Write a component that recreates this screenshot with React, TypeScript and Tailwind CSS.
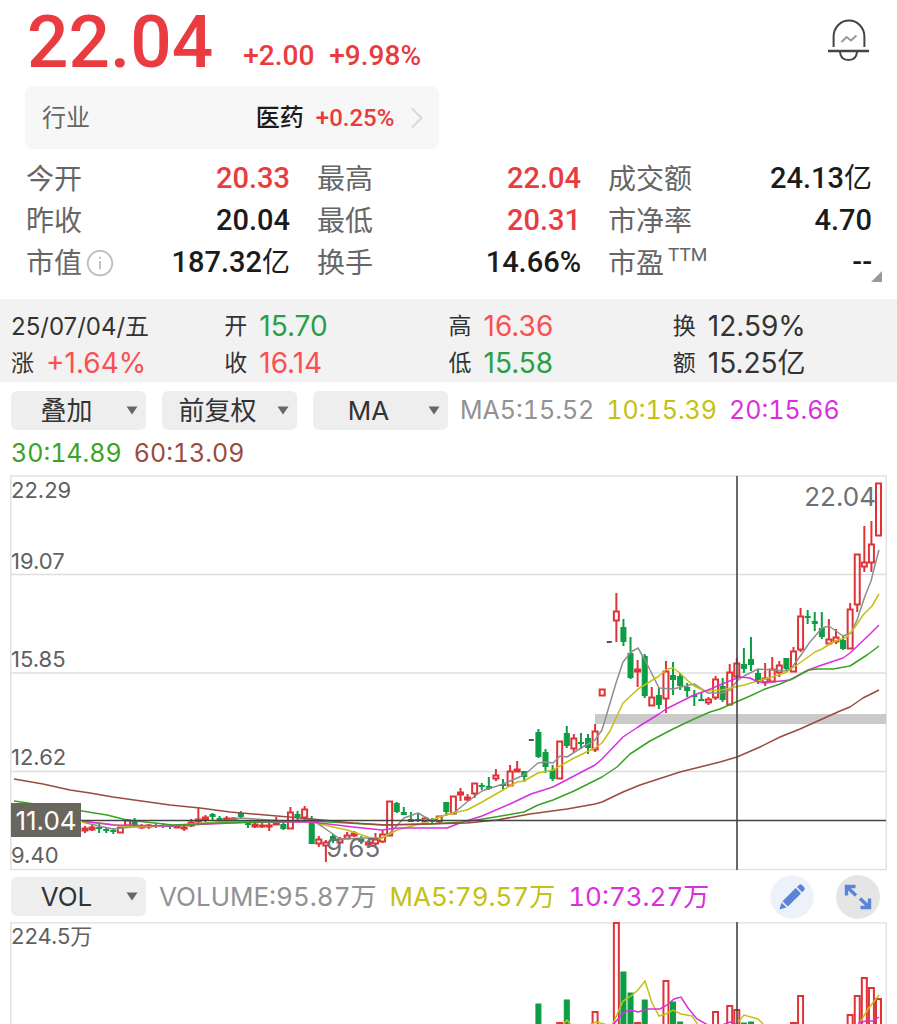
import type { ReactNode } from "react";

const RED = "#e13238";
const GREEN = "#0b9e45";
const LAST_X = 878.5;
const PITCH = 7.085;

// direction, high, body top, body bottom, low; newest candle first
type Candle = ["r" | "g" | "-", number, number, number, number];

const candles: Candle[] = [
  ["r", 483, 483, 536, 536], ["r", 521, 544, 563, 572], ["r", 526, 562, 567, 572], ["r", 554, 554, 605, 612],
  ["r", 603, 609, 649, 649], ["g", 635, 640, 649, 650], ["r", 629, 637, 642, 644], ["r", 619, 639, 644, 644],
  ["g", 612, 628, 637, 639], ["g", 612, 621, 624, 631], ["g", 610, 616, 618, 624], ["r", 608, 616, 650, 652],
  ["r", 647, 651, 672, 672], ["g", 658, 658, 669, 671], ["r", 661, 665, 673, 677], ["r", 657, 669, 682, 682],
  ["r", 663, 678, 683, 686], ["g", 670, 673, 681, 684], ["g", 637, 659, 665, 671], ["g", 648, 664, 669, 673],
  ["r", 658, 663, 677, 677], ["r", 664, 672, 705, 705], ["g", 678, 686, 700, 702], ["r", 676, 679, 698, 700],
  ["r", 697, 699, 703, 705], ["g", 692, 699, 701, 701], ["g", 690, 695, 697, 706], ["g", 683, 687, 691, 697],
  ["g", 673, 676, 686, 690], ["g", 662, 675, 680, 695], ["r", 661, 671, 699, 713], ["g", 688, 695, 705, 709],
  ["r", 687, 697, 706, 706], ["g", 654, 656, 696, 698], ["r", 660, 669, 672, 687], ["g", 637, 653, 678, 679],
  ["g", 619, 627, 642, 646], ["r", 593, 611, 621, 642], ["-", 642, 642, 642, 642], ["r", 689, 689, 696, 696],
  ["r", 724, 731, 750, 752], ["g", 734, 738, 748, 754], ["g", 733, 742, 744, 749], ["r", 734, 738, 749, 753],
  ["g", 726, 733, 746, 748], ["r", 741, 741, 779, 779], ["g", 765, 770, 779, 781], ["g", 749, 752, 767, 773],
  ["g", 729, 732, 757, 758], ["-", 740, 740, 740, 740], ["g", 771, 771, 777, 782], ["r", 761, 769, 772, 772],
  ["r", 765, 771, 786, 786], ["g", 779, 784, 786, 790], ["r", 769, 775, 779, 781], ["g", 777, 786, 789, 790],
  ["g", 783, 785, 787, 790], ["r", 783, 783, 794, 798], ["r", 794, 797, 800, 801], ["r", 788, 792, 795, 801],
  ["r", 796, 796, 814, 814], ["g", 802, 802, 812, 816], ["r", 816, 816, 822, 823], ["g", 818, 819, 822, 823],
  ["r", 817, 818, 822, 822], ["g", 814, 819, 821, 822], ["g", 812, 819, 822, 822], ["g", 807, 812, 815, 815],
  ["g", 802, 803, 812, 813], ["r", 801, 801, 836, 836], ["r", 830, 834, 842, 843], ["r", 833, 839, 844, 846],
  ["r", 840, 842, 845, 845], ["g", 836, 838, 842, 844], ["r", 831, 833, 836, 837], ["r", 832, 835, 839, 839],
  ["r", 837, 839, 843, 844], ["g", 834, 836, 841, 843], ["r", 840, 842, 846, 862], ["r", 836, 839, 844, 847],
  ["g", 816, 820, 844, 844], ["r", 806, 809, 818, 820], ["g", 811, 814, 817, 821], ["r", 807, 812, 829, 829],
  ["g", 822, 824, 829, 830], ["r", 817, 823, 824, 825], ["r", 823, 825, 827, 831], ["r", 823, 825, 826, 828],
  ["r", 823, 824, 827, 828], ["g", 820, 822, 825, 828], ["g", 811, 813, 817, 818], ["r", 817, 818, 821, 821],
  ["r", 816, 818, 820, 821], ["g", 816, 818, 821, 822], ["g", 813, 814, 817, 820], ["r", 815, 817, 820, 822],
  ["r", 808, 819, 822, 823], ["r", 819, 822, 826, 827], ["r", 825, 827, 829, 831], ["r", 824, 826, 827, 828],
  ["g", 824, 825, 827, 829], ["g", 823, 825, 826, 828], ["g", 823, 825, 827, 828], ["r", 824, 825, 827, 829],
  ["r", 824, 826, 828, 829], ["g", 818, 820, 826, 827], ["r", 819, 820, 826, 827], ["r", 827, 827, 833, 833],
  ["g", 828, 830, 832, 834], ["g", 827, 829, 831, 833], ["g", 824, 827, 829, 833], ["r", 825, 827, 830, 831],
  ["r", 826, 828, 831, 833],
];

const averages = [
  { color: "#8f8f8f", points: "82,822 99,826 113,829 133,827 170,826 220,822 240,818 283,821 312,820 323,827 340,839 367,838 382,838 390,833 404,818 418,813 432,821 439,817 455,812 467,802 482,791 503,784 524,775 538,763 546,762 553,763 560,756 567,757 581,748 595,740 602,730 616,683 623,662 631,652 638,648 645,660 659,688 673,689 694,684 708,693 722,693 730,690 737,681 744,676 750,673 758,669 773,670 787,671 793,666 801,655 810,642 822,628 829,626 836,631 843,636 851,633 857,620 865,596 871,581 875,565 879,550" },
  { color: "#c3c111", points: "82,822 100,823 133,827 180,825 220,822 253,821 312,822 333,827 347,830 368,837 380,839 397,830 412,826 425,823 439,817 453,813 467,810 482,802 503,790 517,782 524,781 538,773 553,770 574,758 595,748 602,743 610,731 623,703 638,689 659,676 667,669 673,668 680,673 687,680 694,686 705,691 722,690 744,685 772,677 787,672 801,662 815,652 822,649 833,642 847,637 855,627 863,615 872,606 879,594" },
  { color: "#d92fdc", points: "82,821 113,825 167,826 253,822 312,822 353,827 382,830 397,828 430,828 447,828 460,823 482,816 510,804 531,794 553,787 574,776 595,765 602,759 623,737 638,727 659,714 666,709 694,695 708,690 727,682 740,677 750,678 758,682 772,682 790,680 808,670 822,665 843,658 850,653 870,634 879,625" },
  { color: "#39a324", points: "14,801 82,811 107,815 127,820 173,825 220,823 312,821 382,825 430,824 463,822 489,818 524,812 538,805 553,800 574,791 602,777 617,767 630,754 650,741 673,729 694,719 710,712 720,709 750,696 765,689 780,684 794,678 801,674 809,670 817,669 833,669 850,666 867,655 879,646" },
  { color: "#9a4b40", points: "14,779 43,784 70,790 90,793 113,797 170,805 200,808 230,812 277,816 312,819 353,823 387,825 425,824 467,823 497,820 530,814 567,809 595,804 602,802 623,792 640,785 680,772 720,762 737,757 760,747 780,737 800,729 820,720 840,711 850,707 863,698 879,690" },
];

// slot counted from the newest bar, direction, top
const volumes: [number, "r" | "g", number][] = [
  [48, "g", 1003], [45, "r", 1022], [44, "g", 999], [40, "r", 1011], [37, "r", 922], [36, "g", 971], [35, "g", 992],
  [34, "r", 1022], [33, "g", 999], [30, "r", 980], [29, "g", 1001], [28, "g", 1021], [23, "r", 1011], [21, "r", 1005],
  [20, "r", 1009], [19, "g", 1022], [18, "g", 1021], [12, "r", 1022], [11, "r", 995], [4, "r", 1014], [3, "r", 995],
  [2, "r", 977], [1, "r", 987], [0, "r", 998],
];

const volumeAverages = [
  { color: "#c3c111", points: "562,1026 567,1020 572,1026" },
  { color: "#c3c111", points: "589,1025 596,1022 612,1026 623,1001 631,996 638,990 645,981 652,1003 659,1016 666,1014 673,1010 681,1014 692,1016 699,1026" },
  { color: "#c3c111", points: "735,1026 744,1015 758,1019 765,1026" },
  { color: "#c3c111", points: "858,1026 868,1009 879,995" },
  { color: "#d92fdc", points: "612,1026 624,1012 631,1010 638,1012 648,1009 660,1009 667,1005 674,999 681,997 688,1008 697,1019 708,1025" },
  { color: "#d92fdc", points: "722,1025 730,1022 738,1025" },
  { color: "#d92fdc", points: "858,1023 866,1021 873,1021 879,1017" },
];

function CandleMark({ index, candle }: { index: number; candle: Candle }) {
  const [kind, high, top, bottom, low] = candle;
  const x = LAST_X - index * PITCH;
  if (kind === "-") return <rect x={x - 2.5} y={top - 1} width="5" height="2" fill="#555" />;
  const color = kind === "r" ? RED : GREEN;
  return (
    <g stroke={color} strokeWidth="2">
      {high < top && <line x1={x} x2={x} y1={high} y2={top} />}
      {low > bottom && <line x1={x} x2={x} y1={bottom} y2={low} />}
      <rect x={x - 2.5} y={top + 0.5} width="5" height={Math.max(bottom - top - 1, 1)} fill={kind === "g" ? color : "none"} strokeWidth={kind === "g" ? 1 : 2} />
    </g>
  );
}

function PriceChart() {
  return (
    <svg viewBox="10 475 877 396" className="block h-auto w-full font-['Inter',sans-serif]" role="img" aria-label="K线图">
      <g stroke="#dedede" strokeWidth="1.3" fill="none">
        <rect x="10.8" y="476" width="875.4" height="393.5" />
        <path d="M11 574.5H886M11 673H886M11 771.5H886" />
      </g>
      <rect x="595" y="714" width="291" height="10" fill="#cacaca" />
      {candles.map((c, i) => <CandleMark key={i} index={i} candle={c} />)}
      {averages.map((l) => <polyline key={l.color} points={l.points} stroke={l.color} strokeWidth="1.5" fill="none" strokeLinejoin="round" />)}
      <path d="M11 820.5H886M737 476V870" stroke="#444" strokeWidth="1.6" />
      <g fontSize="22" fill="#606060">
        <text x="11" y="498">22.29</text>
        <text x="11" y="569">19.07</text>
        <text x="11" y="667">15.85</text>
        <text x="11" y="765">12.62</text>
        <text x="11" y="863">9.40</text>
      </g>
      <g fontSize="26" fill="#707070">
        <text x="876" y="506" textAnchor="end">22.04</text>
        <text x="326" y="857">9.65</text>
      </g>
      <rect x="11" y="803" width="70" height="34" fill="#69665d" />
      <text x="46" y="830" fontSize="26" fill="#fff" textAnchor="middle">11.04</text>
    </svg>
  );
}

function VolumeChart() {
  return (
    <svg viewBox="10 922 877 102" className="block h-auto w-full font-['Inter','Noto_Sans_CJK_SC',sans-serif]" role="img" aria-label="成交量">
      <path d="M10.8 1030V922.8H886.2V1030" stroke="#dedede" strokeWidth="1.3" fill="none" />
      {volumes.map(([slot, kind, top]) => {
        const color = kind === "r" ? RED : GREEN;
        return <rect key={slot} x={LAST_X - slot * PITCH - 2.5} y={top + 1} width="5" height="130" stroke={color} strokeWidth={kind === "r" ? 2 : 1} fill={kind === "g" ? color : "none"} />;
      })}
      {volumeAverages.map((l) => <polyline key={l.points} points={l.points} stroke={l.color} strokeWidth="1.5" fill="none" />)}
      <path d="M737 922V1030" stroke="#444" strokeWidth="1.6" />
      <text x="11" y="944" fontSize="22" fill="#606060">224.5万</text>
    </svg>
  );
}

function Picker({ label, options }: { label: string; options: string[] }) {
  return (
    <label className="relative block w-[135px] flex-none">
      <select aria-label={label} className="block h-[39px] w-full appearance-none rounded-md bg-[#eeeeee] pr-6 text-center text-[26px] leading-[39px] text-[#333]">
        {options.map((o) => <option key={o}>{o}</option>)}
      </select>
      <svg viewBox="0 0 12 9" className="pointer-events-none absolute top-[15px] right-2 h-[9px] w-3" aria-hidden="true">
        <path d="M0.5 0.5H11.5L6 8.5Z" fill="#666" />
      </svg>
    </label>
  );
}

function Stat({ label, value, red }: { label: ReactNode; value: ReactNode; red?: boolean }) {
  return (
    <div className="flex h-[42px] items-center justify-between">
      <dt className="flex items-center pt-1 text-[28px]">{label}</dt>
      <dd className={red ? "text-[29px] font-medium text-[#e93b40]" : "text-[29px] font-medium text-[#1b1b1b]"}>{value}</dd>
    </div>
  );
}

function Quote({ label, value, tone }: { label: string; value: string; tone: "up" | "down" | "flat" }) {
  const color = tone === "up" ? "text-[#fa5052]" : tone === "down" ? "text-[#2b9e48]" : "text-[#333]";
  return (
    <span className="flex items-center gap-3">
      <span className="text-[23px] text-[#333]">{label}</span>
      <span className={color}>{value}</span>
    </span>
  );
}

const yi = <span className="text-[28px] font-normal">亿</span>;

export default function App() {
  return (
    <main className="w-full bg-white font-['Inter','Noto_Sans_CJK_SC',sans-serif]">
      <section className="font-['Roboto','Noto_Sans_CJK_SC',sans-serif]">
        <header className="flex h-[86px] items-start pr-[27px] pl-[27px] font-medium text-[#e93b40]">
          <h1 className="text-[73px] leading-[84px] font-medium">22.04</h1>
          <p className="ml-[30px] flex gap-[15px] pt-9 text-[28px] leading-10">
            <span>+2.00</span>
            <span>+9.98%</span>
          </p>
          <button type="button" aria-label="股价提醒" className="mt-[18px] ml-auto">
            <svg viewBox="0 0 44 44" className="block h-11 w-11" fill="none" stroke="#444" strokeWidth="2">
              <path d="M7.600 29V18.500A15.400 16 0 0 1 38.400 18.500V29" />
              <path d="M2 33H43" strokeWidth="2.4" />
              <path d="M14 34C14.500 39.500 18 42 22.500 42S30.500 39.500 31 34" />
              <path d="M15.500 24L20.500 19L25 22.500L30.500 17.500" stroke="#999" />
            </svg>
          </button>
        </header>
        <a href="#industry" className="ml-[25px] flex h-[63px] w-[46.2%] items-center rounded-lg bg-[#f7f7f7] pt-px pr-[15px] pl-[17px] text-2xl">
          <span className="text-[#666]">行业</span>
          <span className="ml-auto font-medium text-[#1b1b1b]">医药</span>
          <span className="ml-3 font-medium text-[#e93b40]">+0.25%</span>
          <svg viewBox="0 0 14 24" className="ml-4 h-6 w-[14px]" fill="none" stroke="#d8d8d8" strokeWidth="2" aria-hidden="true">
            <path d="M2 2.500L11.500 12L2 21.500" />
          </svg>
        </a>
        <div className="relative">
          <dl className="grid grid-cols-3 gap-x-[27px] pt-2 pr-[25px] pb-4 pl-[26px] leading-[42px] text-[#666]">
            <Stat label="今开" value="20.33" red />
            <Stat label="最高" value="22.04" red />
            <Stat label="成交额" value={<>24.13{yi}</>} />
            <Stat label="昨收" value="20.04" />
            <Stat label="最低" value="20.31" red />
            <Stat label="市净率" value="4.70" />
            <Stat
              label={
                <>
                  市值
                  <svg viewBox="0 0 28 28" className="ml-1 h-7 w-7 pb-px" fill="none" stroke="#bbb" strokeWidth="1.8" aria-hidden="true">
                    <circle cx="14" cy="13.700" r="12.700" />
                    <path d="M14 11.500V20M14 7V9.200" />
                  </svg>
                </>
              }
              value={<>187.32{yi}</>}
            />
            <Stat label="换手" value="14.66%" />
            <Stat label={<>市盈<sup className="ml-1 text-[19px]">TTM</sup></>} value="--" />
          </dl>
          <svg viewBox="0 0 11 11" className="absolute right-[15px] bottom-[17px] h-[11px] w-[11px]" aria-hidden="true">
            <path d="M11 0V11H0Z" fill="#999" />
          </svg>
        </div>
      </section>

      <section className="grid h-[83px] grid-cols-4 content-center bg-[#f2f2f2] pt-2 text-[28px] leading-[37px]">
        <span className="pl-[11px] text-[24px] text-[#333]">25/07/04/五</span>
        <Quote label="开" value="15.70" tone="down" />
        <Quote label="高" value="16.36" tone="up" />
        <Quote label="换" value="12.59%" tone="flat" />
        <span className="pl-[11px]"><Quote label="涨" value="+1.64%" tone="up" /></span>
        <Quote label="收" value="16.14" tone="up" />
        <Quote label="低" value="15.58" tone="down" />
        <Quote label="额" value="15.25亿" tone="flat" />
      </section>

      <section className="px-[10px] pt-[7px]">
        <div className="flex flex-wrap items-center gap-x-3 pl-px text-[25px] leading-[43px] tabular-nums">
          <div className="flex h-[39px] gap-4">
            <Picker label="叠加" options={["叠加"]} />
            <Picker label="复权" options={["前复权", "后复权", "不复权"]} />
            <Picker label="主图指标" options={["MA", "BOLL"]} />
          </div>
          <span className="text-[#929292]">MA5:15.52</span>
          <span className="text-[#c3c111]">10:15.39</span>
          <span className="text-[#d92fdc]">20:15.66</span>
          <span className="text-[#39a324]">30:14.89</span>
          <span className="text-[#9a4b40]">60:13.09</span>
        </div>
        <PriceChart />
        <div className="flex h-[51px] items-center gap-[13px] pl-px text-[26px] tabular-nums">
          <Picker label="副图指标" options={["VOL", "MACD"]} />
          <span className="text-[#929292]">VOLUME:95.87万</span>
          <span className="text-[#c3c111]">MA5:79.57万</span>
          <span className="text-[#d92fdc]">10:73.27万</span>
          <div className="mr-[7px] ml-auto flex flex-none gap-[22px]">
            <button type="button" aria-label="画线">
              <svg viewBox="0 0 44 44" className="block h-11 w-11" aria-hidden="true">
                <circle cx="22" cy="22" r="21.700" fill="#edf1fa" />
                <g fill="#5b84d9">
                  <path d="M9.500 34.500L11.500 27.500L16.500 32.500Z" />
                  <path d="M12.500 26.300L25.700 13.100L31 18.400L17.800 31.600Z" />
                  <path d="M26.900 11.900L29 9.900Q30.500 8.600 32 10L34 12Q35.500 13.600 34.200 15.200L32.200 17.200Z" />
                </g>
              </svg>
            </button>
            <button type="button" aria-label="全屏">
              <svg viewBox="0 0 44 44" className="block h-11 w-11" aria-hidden="true">
                <circle cx="22" cy="22" r="22" fill="#e5e5e5" />
                <path d="M10.500 20.500V11.500H19.500M11 12L20 20.500M33.500 23.500V32.500H24.500M33 32L24 23.500" fill="none" stroke="#5b84d9" strokeWidth="3.4" />
              </svg>
            </button>
          </div>
        </div>
        <VolumeChart />
      </section>
    </main>
  );
}
